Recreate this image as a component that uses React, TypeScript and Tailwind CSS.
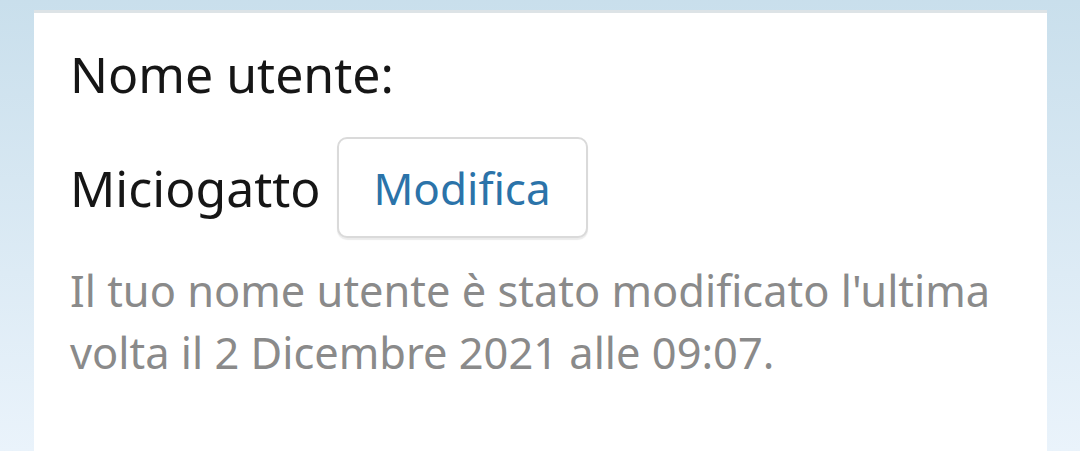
import React from "react";

export default function App() {
  return (
    <div
      className="w-[1080px] h-[451px] overflow-hidden bg-gradient-to-b from-[#c9dfec] to-[#eaf3fb] pt-[10px] pl-[34px]"
      style={{ fontFamily: '"Noto Sans", sans-serif' }}
    >
      <div className="w-[1013px] h-[460px] bg-white border-t-[3px] border-[#dde3e6] pl-[36px] pt-[24px]">
        <div className="text-[50px] leading-[74px] text-[#161616]">Nome utente:</div>
        <div className="flex items-center mt-[26px] gap-[16px]">
          <span className="text-[50px] leading-[74px] text-[#161616]">Miciogatto</span>
          <button className="w-[251px] h-[101px] rounded-[10px] border-2 border-[#dadada] shadow-[0_2px_1px_rgba(0,0,0,0.08)] bg-white text-[44px] text-[#2b73a9] flex items-center justify-center">
            Modifica
          </button>
        </div>
        <div className="mt-[22px] text-[43.4px] leading-[62px] text-[#8a8a8a] w-[960px]">
          Il tuo nome utente è stato modificato l'ultima volta il 2 Dicembre 2021 alle 09:07.
        </div>
      </div>
    </div>
  );
}
